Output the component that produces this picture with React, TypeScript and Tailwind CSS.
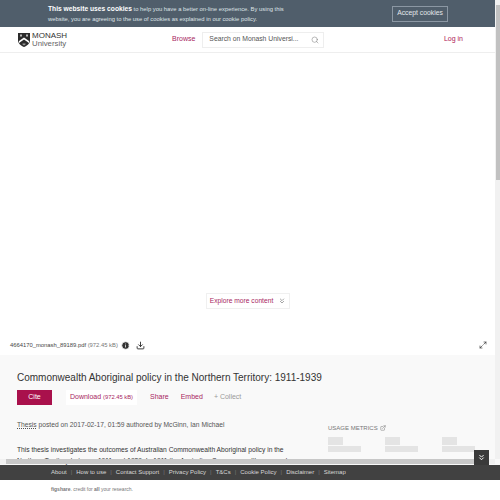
import { ChevronsDown, Download, ExternalLink, Info, Maximize2, Search } from 'lucide-react'

const footerLinks = ['About', 'How to use', 'Contact Support', 'Privacy Policy', 'T&Cs', 'Cookie Policy', 'Disclaimer', 'Sitemap']

function MetricStub() {
  return (
    <div className="flex flex-col gap-[1px] w-[33px]">
      <div className="h-[8px] w-[15px] bg-[#e4e4e4]" />
      <div className="h-[6px] w-[33px] bg-[#e4e4e4]" />
    </div>
  )
}

export default function App() {
  return (
    <div className="relative flex h-[500px] w-[500px] flex-col overflow-hidden bg-white font-['Liberation_Sans',Arial,sans-serif] text-[#464646]">
      {/* Cookie banner */}
      <div className="flex h-[27px] shrink-0 items-center bg-[#505e6b] pl-[48px] pr-[52px] text-white">
        <div className="whitespace-nowrap text-[5.850px] leading-[10px] text-[#dfe3e7]">
          <p><b className="text-[6.700px] text-white">This website uses cookies</b> to help you have a better on-line experience. By using this</p>
          <p>website, you are agreeing to the use of cookies as explained in our cookie policy.</p>
        </div>
        <button className="ml-auto h-[16px] w-[56px] border border-[#8b97a3] text-[6.800px] text-[#e3e7ea]">Accept cookies</button>
      </div>

      {/* Header */}
      <div className="flex h-[26px] shrink-0 items-center border-b border-[#eeeeee] pl-[18px] pr-[37px]">
        <svg width="12" height="14" viewBox="0 0 12 14" className="shrink-0">
          <path d="M0 0h12v7c0 3.500-2.500 5.500-6 7-3.500-1.500-6-3.500-6-7z" fill="#2b2b2b" />
          <rect x="2" y="1.500" width="2" height="2" fill="#bbb" />
          <rect x="8" y="1.500" width="2" height="2" fill="#bbb" />
          <path d="M1 8l5-3.500L11 8v2L6 6.500 1 10z" fill="#fff" />
          <path d="M4.500 10.500h3v1l-1.500 1-1.500-1z" fill="#999" />
        </svg>
        <div className="ml-[2px] flex w-[48px] flex-col leading-[8px] text-[#333]">
          <span className="text-[8px]">MONASH</span>
          <span className="text-[7.800px] text-[#666]">University</span>
        </div>
        <span className="ml-[92px] text-[7px] text-[#a8265f]">Browse</span>
        <div className="ml-[7px] flex h-[16px] w-[122px] items-center justify-between border border-[#eeeeee] pl-[6px] pr-[4px] text-[6.800px] text-[#555]">
          <span>Search on Monash Universi...</span>
          <Search size={8} strokeWidth={1.500} className="text-[#777]" />
        </div>
        <span className="ml-auto text-[7px] text-[#b02058]">Log in</span>
      </div>

      {/* Viewer */}
      <div className="flex h-[282px] shrink-0 flex-col items-center justify-end pb-[26px] pr-[4px]">
        <div className="flex h-[16px] w-[84px] items-center justify-center gap-[5px] whitespace-nowrap border border-[#f0f0f0] text-[6.700px] text-[#a8265f]">
          Explore more content
          <ChevronsDown size={8} className="text-[#777]" />
        </div>
      </div>

      {/* File bar */}
      <div className="flex h-[20px] shrink-0 items-center pl-[10px] pr-[13px] text-[5.850px]">
        <span>4664170_monash_89189.pdf <span className="text-[#777]">(972.45 kB)</span></span>
        <Info size={9} className="ml-[3px] fill-[#333] text-white" />
        <Download size={9} strokeWidth={2.500} className="ml-[6px] text-[#333]" />
        <Maximize2 size={8} className="ml-auto text-[#333]" />
      </div>

      {/* Item details */}
      <div className="flex h-[110px] shrink-0 flex-col overflow-hidden bg-[#f9f9f9] pl-[17px] pt-[16px]">
        <h1 className="text-[10px] leading-[14px] text-[#333]">Commonwealth Aboriginal policy in the Northern Territory: 1911-1939</h1>
        <div className="mt-[5px] flex items-center text-[7px]">
          <div className="flex h-[15px] w-[35px] items-center justify-center bg-[#a9114c] text-white">Cite</div>
          <div className="ml-[14px] flex h-[15px] w-[71px] items-center justify-center bg-white text-[#a8265f]">
            Download&nbsp;<span className="text-[5.800px]">(972.45 kB)</span>
          </div>
          <span className="ml-[13px] text-[#a8265f]">Share</span>
          <span className="ml-[12px] text-[#a8265f]">Embed</span>
          <span className="ml-[11px] text-[#999]">+ Collect</span>
        </div>
        <div className="mt-[14px] flex">
          <div className="w-[311px] shrink-0 text-[6.700px] leading-[12px]">
            <p className="text-[#555]"><span className="underline decoration-dotted">Thesis</span> posted on 2017-02-17, 01:59 authored by McGinn, Ian Michael</p>
            <p className="mt-[13px] whitespace-nowrap leading-[11px] text-[#333]">
              This thesis investigates the outcomes of Australian Commonwealth Aboriginal policy in the
              <br />
              Northern Territory between 1911 and 1939. In 1911 the Australian Commonwealth assumed
            </p>
          </div>
          <div className="flex flex-col pt-[3px]">
            <div className="flex items-center gap-[2px] text-[6px] leading-[12px] text-[#777]">
              USAGE METRICS
              <ExternalLink size={6} />
            </div>
            <div className="mt-[3px] flex gap-[24px]">
              <MetricStub />
              <MetricStub />
              <MetricStub />
            </div>
          </div>
        </div>
      </div>

      {/* Footer */}
      <div className="flex h-[15px] shrink-0 items-center whitespace-nowrap bg-[#414141] pl-[51px] text-[6px] text-[#d8d8d8]">
        {footerLinks.map((link, i) => (
          <span key={link} className="flex items-center">
            {i > 0 && <span className="mx-[4px] text-[#777]">|</span>}
            {link}
          </span>
        ))}
      </div>
      <div className="flex h-[20px] shrink-0 items-center pl-[51px] text-[5px] text-[#777]">
        <span><b>figshare</b>. credit for <b>all</b> your research.</span>
      </div>

      {/* Page scrollbar */}
      <div className="absolute right-0 top-0 h-[459px] w-[5px] bg-[#f1f1f1]">
        <div className="ml-[1px] mt-[5px] h-[175px] w-[4px] bg-[#c1c1c1]" />
      </div>
      {/* Horizontal scrollbar */}
      <div className="absolute left-0 top-[459px] h-[5px] w-[495px] bg-[#f1f1f1]">
        <div className="ml-[6px] h-[5px] w-[468px] bg-[#c8c8c8]" />
      </div>
      {/* Collapse button */}
      <div className="absolute left-[474px] top-[450px] flex h-[15px] w-[15px] items-center justify-center bg-[#3a3a3a]">
        <ChevronsDown size={9} strokeWidth={2.500} className="text-white" />
      </div>
    </div>
  )
}
